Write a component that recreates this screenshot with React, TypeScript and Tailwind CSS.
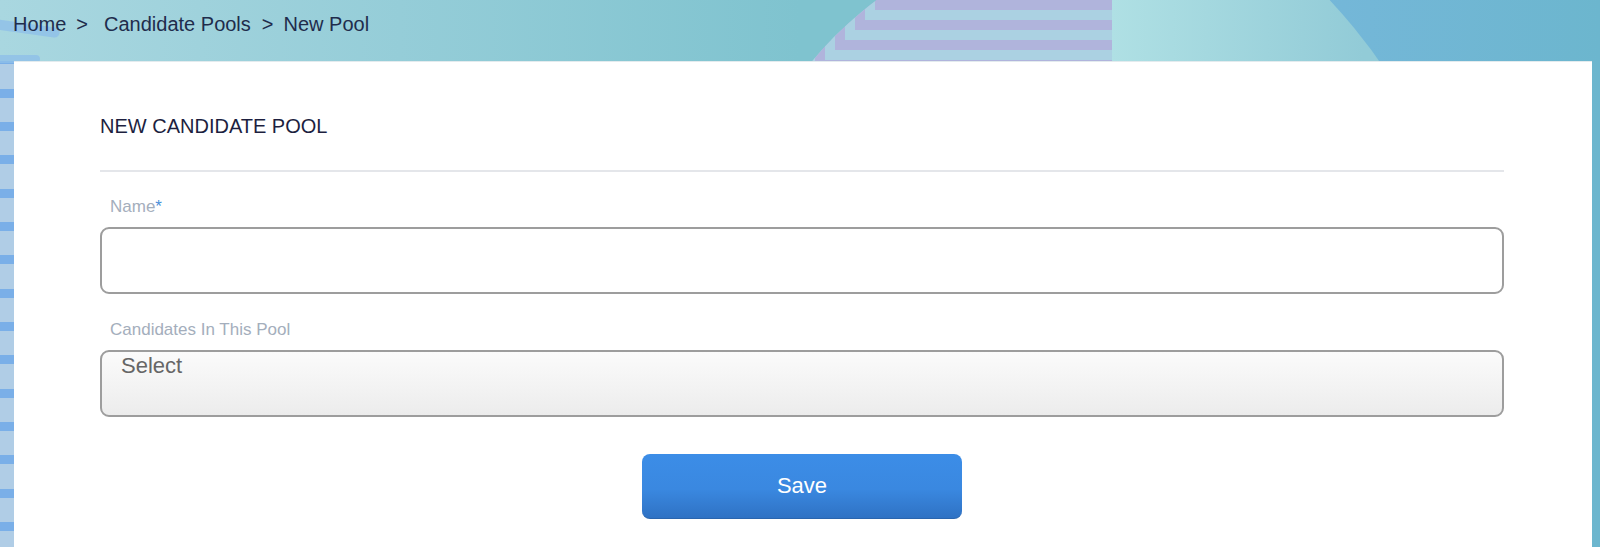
import React from 'react';

const crumbs = ['Home', 'Candidate Pools', 'New Pool'];

function Backdrop() {
  return (
    <div className="absolute inset-0 overflow-hidden bg-[linear-gradient(to_right,#a9d7e0_0px,#95cdd8_400px,#7fc3cf_800px)]">
      {/* left stripes */}
      <div className="absolute left-0 top-0 bottom-0 w-[40px] bg-[repeating-linear-gradient(to_bottom,#b0cde6_0px,#b0cde6_22px,#7aafe8_22px,#7aafe8_31px,#b0cde6_31px,#b0cde6_33.33px)] [clip-path:polygon(0_61px,40px_61px,40px_100%,0_100%)]" />
      <div className="absolute left-[-30px] top-[22px] w-[90px] h-[10px] rounded-full bg-[#8ebfe8] opacity-80 rotate-[8deg]" />
      <div className="absolute left-[-30px] top-[55px] w-[70px] h-[8px] rounded-full bg-[#8ebfe8] opacity-80" />

      {/* chevron circle */}
      <div className="absolute inset-0 [clip-path:circle(374px_at_1100px_300px)]">
        <div className="absolute inset-0 bg-[repeating-linear-gradient(to_bottom,#b0b4dc_0px,#b0b4dc_10px,#abd1e2_10px,#abd1e2_20px)]" />
        <div className="absolute inset-0 [clip-path:polygon(0_0,885px_0,0_885px)] bg-[repeating-linear-gradient(to_right,#b0b4dc_0px,#b0b4dc_5px,#abd1e2_5px,#abd1e2_15px,#b0b4dc_15px,#b0b4dc_20px)]" />
      </div>

      {/* right side */}
      <div className="absolute left-[1112px] top-0 right-0 bottom-0 overflow-hidden bg-[linear-gradient(to_right,#7bb8e1,#6cb6ce)]">
        <div className="absolute left-[-799px] top-[-187px] w-[1174px] h-[1174px] rounded-full bg-[linear-gradient(to_right,#afe0e4_799px,#92cbd7_1050px)]" />
      </div>
    </div>
  );
}

export default function App() {
  return (
    <div className="relative min-h-screen font-['Liberation_Sans',Arial,sans-serif]">
      <Backdrop />

      <div className="relative">
        {/* Breadcrumb */}
        <nav className="h-[61px] pt-[12px] pl-[13px] flex items-start text-[20px] leading-6 text-[#1f2c4c]">
          <span>{crumbs[0]}</span>
          <span className="ml-[10px]">&gt;</span>
          <span className="ml-[16px]">{crumbs[1]}</span>
          <span className="ml-[11px]">&gt;</span>
          <span className="ml-[10px]">{crumbs[2]}</span>
        </nav>

        {/* Card */}
        <div className="ml-[14px] mr-[8px] bg-white border-t border-[#e3ebee] pt-[52px] pl-[86px] pr-[88px] pb-[60px]">
          <h1 className="text-[20px] leading-6 text-[#1d1f3f] pb-[32px] border-b-2 border-[#e4e6ea]">
            NEW CANDIDATE POOL
          </h1>

          <label className="block mt-[25px] pl-[10px] text-[17px] leading-5 text-[#a4aebc]">
            Name<span className="text-[#4a8fd9]">*</span>
          </label>
          <input
            type="text"
            className="block mt-[10px] w-full h-[67px] rounded-[9px] border-2 border-[#9d9d9d] bg-white outline-none px-4 text-[20px]"
          />

          <label className="block mt-[26px] pl-[10px] text-[17px] leading-5 text-[#a4aebc]">
            Candidates In This Pool
          </label>
          <div className="mt-[10px] h-[67px] rounded-[9px] border-2 border-[#9d9d9d] bg-[linear-gradient(to_bottom,#fbfbfb,#ececec)] pl-[19px] pt-[1px] text-[22px] leading-[26px] text-[#666666]">
            Select
          </div>

          <div className="mt-[37px] flex justify-center">
            <button className="w-[320px] h-[65px] rounded-[8px] bg-[linear-gradient(to_bottom,#3c8de7,#3a88e0_55%,#2f72c4)] border-b border-[#2a65ae] text-white text-[22px] leading-none">
              Save
            </button>
          </div>
        </div>
      </div>
    </div>
  );
}
